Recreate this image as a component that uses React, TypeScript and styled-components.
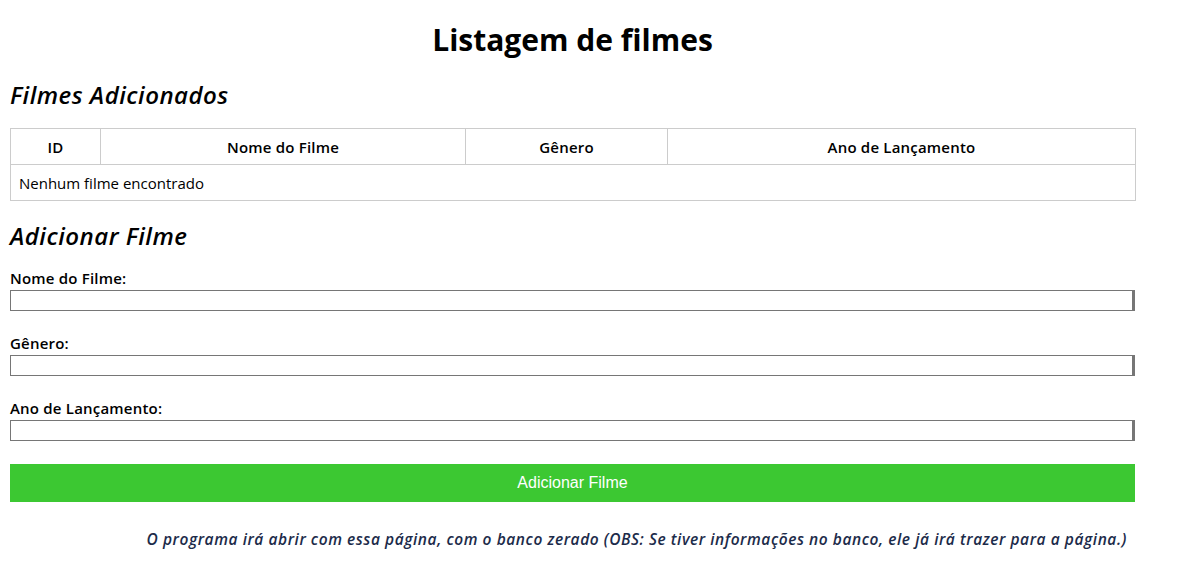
import styled, { createGlobalStyle } from 'styled-components';

const GlobalStyle = createGlobalStyle`
  html, body {
    margin: 0;
    padding: 0;
    background-color: #ffffff;
  }
  body {
    font-family: 'Trebuchet MS', 'Open Sans', 'Liberation Sans', sans-serif;
    color: #000;
  }
`;

const columns = [
  { label: 'ID', width: 90 },
  { label: 'Nome do Filme', width: 365 },
  { label: 'Gênero', width: 202 },
  { label: 'Ano de Lançamento', width: 468 },
];

const fields = ['Nome do Filme:', 'Gênero:', 'Ano de Lançamento:'];

const App = () => {
  return (
    <>
      <GlobalStyle />
      <Page>
        <Title>Listagem de filmes</Title>

        <SectionTitle gap={19}>Filmes Adicionados</SectionTitle>
        <MovieTable>
          <colgroup>
            {columns.map((col) => (
              <col key={col.label} style={{ width: col.width }} />
            ))}
          </colgroup>
          <thead>
            <tr>
              {columns.map((col) => (
                <HeadCell key={col.label}>{col.label}</HeadCell>
              ))}
            </tr>
          </thead>
          <tbody>
            <tr>
              <BodyCell colSpan={4}>Nenhum filme encontrado</BodyCell>
            </tr>
          </tbody>
        </MovieTable>

        <SectionTitle gap={21}>Adicionar Filme</SectionTitle>
        <Form onSubmit={(e) => e.preventDefault()}>
          {fields.map((field) => (
            <Field key={field}>
              <Label>{field}</Label>
              <Input type="text" />
            </Field>
          ))}
          <SubmitButton type="submit">Adicionar Filme</SubmitButton>
        </Form>

        <Note>
          O programa irá abrir com essa página, com o banco zerado (OBS: Se tiver
          informações no banco, ele já irá trazer para a página.)
        </Note>
      </Page>
    </>
  );
};

const Page = styled.div`
  width: 1125px;
  margin-left: 10px;
  padding-top: 18px;
`;

const Title = styled.h1`
  margin: 0;
  font-size: 30px;
  font-weight: bold;
  text-align: center;
  line-height: 44px;
`;

const SectionTitle = styled.h2<{ gap: number }>`
  margin: ${({ gap }) => gap}px 0 0;
  font-size: 24px;
  font-style: italic;
  font-weight: 600;
  letter-spacing: 0.5px;
  line-height: 28px;
`;

const MovieTable = styled.table`
  width: 100%;
  margin-top: 19px;
  border-collapse: collapse;
  table-layout: fixed;
  font-size: 15px;
`;

const HeadCell = styled.th`
  height: 35px;
  padding: 0 8px;
  border: 1px solid #cccccc;
  font-weight: 600;
  letter-spacing: 0.2px;
  text-align: center;
`;

const BodyCell = styled.td`
  height: 35px;
  padding: 0 8px;
  border: 1px solid #cccccc;
  text-align: left;
`;

const Form = styled.form`
  display: flex;
  flex-direction: column;
  margin-top: 19px;
`;

const Field = styled.div`
  display: flex;
  flex-direction: column;
  margin-bottom: 23px;
`;

const Label = styled.label`
  font-size: 15px;
  font-weight: 600;
  letter-spacing: 0.2px;
  line-height: 18px;
  margin-bottom: 3px;
`;

const Input = styled.input`
  box-sizing: border-box;
  width: 100%;
  height: 21px;
  margin: 0;
  padding: 0 4px;
  border: 1px solid #767676;
  border-right: 3px solid #767676;
  font-family: inherit;
  font-size: 14px;
`;

const SubmitButton = styled.button`
  height: 38px;
  border: none;
  background-color: #3cc832;
  color: #ffffff;
  font-family: 'Liberation Sans', Arial, sans-serif;
  font-size: 16px;
  cursor: pointer;
`;

const Note = styled.p`
  margin: 26px 8px 0 0;
  text-align: right;
  font-size: 15.5px;
  font-style: italic;
  font-weight: 600;
  letter-spacing: 0.56px;
  color: #1c2b4a;
`;

export default App;
